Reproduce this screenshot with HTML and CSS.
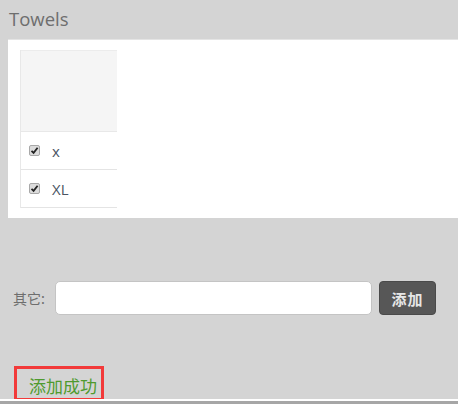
FILE: index.html
```html
<!DOCTYPE html>
<html>
<head>
<meta charset="utf-8">
<link rel="stylesheet" href="styles.css">
</head>
<body>
<div class="page">
  <div class="title">Towels</div>
  <div class="panel">
    <div class="sizes">
      <div class="head"></div>
      <div class="row"><span class="cb"><svg width="9" height="9" viewBox="0 0 9 9"><path d="M1.5 4.8 L3.6 6.8 L7.6 1.8" fill="none" stroke="#222" stroke-width="1.8"/></svg></span><span class="lbl">x</span></div>
      <div class="row"><span class="cb"><svg width="9" height="9" viewBox="0 0 9 9"><path d="M1.5 4.8 L3.6 6.8 L7.6 1.8" fill="none" stroke="#222" stroke-width="1.8"/></svg></span><span class="lbl">XL</span></div>
    </div>
  </div>
  <div class="form">
    <label class="other">其它:</label>
    <input class="field" type="text">
    <button class="add">添加</button>
  </div>
  <div class="msg">添加成功</div>
  <div class="bottom"></div>
</div>
</body>
</html>
```

FILE: styles.css
```css
html, body {
  margin: 0;
  padding: 0;
}
body {
  background: #d4d4d4;
  font-family: "Open Sans", "Noto Sans CJK SC", sans-serif;
  width: 458px;
  height: 404px;
  overflow: hidden;
}
.page {
  display: flex;
  flex-direction: column;
  height: 404px;
}
.title {
  height: 39px;
  box-sizing: border-box;
  padding: 6px 0 0 9px;
  font-size: 18.5px;
  line-height: 26px;
  color: #6e6e6e;
}
.panel {
  margin-left: 8px;
  height: 179px;
  box-sizing: border-box;
  background: #fff;
  border-top: 1px solid #e4e4e4;
  padding: 10px 0 0 12px;
}
.sizes {
  width: 96px;
  border-left: 1px solid #e8e8e8;
}
.head {
  height: 80px;
  background: #f5f5f5;
  border-top: 1px solid #ececec;
  border-bottom: 1px solid #e8e8e8;
}
.row {
  height: 37px;
  border-bottom: 1px solid #e4e4e4;
  display: flex;
  align-items: center;
  padding-left: 8px;
}
.cb {
  width: 11px;
  height: 11px;
  box-sizing: border-box;
  border: 1px solid #a8a8a8;
  border-radius: 2px;
  background: #dcdcdc;
  display: flex;
  align-items: center;
  justify-content: center;
}
.lbl {
  margin-left: 12px;
  font-size: 15px;
  color: #4a5462;
}
.form {
  margin-top: 63px;
  height: 34px;
  display: flex;
  align-items: center;
}
.other {
  margin-left: 13px;
  width: 42px;
  font-size: 14px;
  color: #6e6e6e;
  font-family: "Noto Sans CJK SC", sans-serif;
}
.field {
  width: 317px;
  height: 34px;
  box-sizing: border-box;
  border: 1px solid #c4c4c4;
  border-radius: 5px;
  background: #fff;
  margin: 0;
  padding: 0 8px;
}
.add {
  margin-left: 7px;
  width: 57px;
  height: 34px;
  border: 1px solid #4a4a4a;
  border-radius: 4px;
  background: #575757;
  color: #e6e6e6;
  font-family: "Noto Sans CJK SC", serif;
  font-weight: bold;
  font-size: 15px;
  padding: 0;
  letter-spacing: 1px;
}
.msg {
  margin: 51px 0 0 14px;
  width: 90px;
  height: 35px;
  box-sizing: border-box;
  border: 3px solid #f23a3a;
  padding: 6px 0 0 12px;
  font-family: "Noto Sans CJK SC", sans-serif;
  font-size: 17px;
  line-height: 22px;
  color: #4f9a2e;
  white-space: nowrap;
}
.bottom {
  margin-top: -2px;
  height: 5px;
  border-top: 2px solid #fff;
  box-sizing: border-box;
  background: #a6a6a6;
}
```
